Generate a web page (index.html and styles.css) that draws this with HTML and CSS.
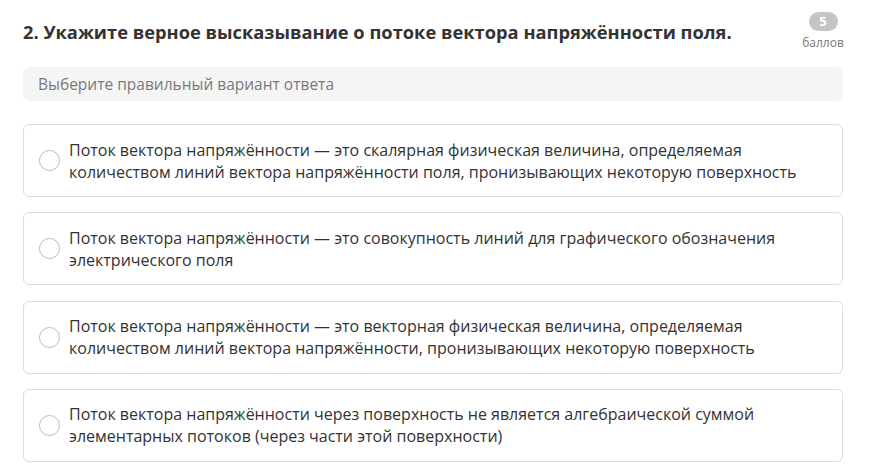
FILE: index.html
```html
<!DOCTYPE html>
<html lang="ru">
<head>
<meta charset="utf-8">
<link rel="stylesheet" href="styles.css">
</head>
<body>
<div class="question">
  <div class="head">
    <h2 class="title">2. Укажите верное высказывание о потоке вектора напряжённости поля.</h2>
    <div class="points">
      <span class="badge">5</span>
      <span class="points-label">баллов</span>
    </div>
  </div>
  <div class="hint">Выберите правильный вариант ответа</div>
  <div class="options">
    <label class="option"><span class="radio"></span><span class="text">Поток вектора напряжённости — это скалярная физическая величина, определяемая количеством линий вектора напряжённости поля, пронизывающих некоторую поверхность</span></label>
    <label class="option"><span class="radio"></span><span class="text">Поток вектора напряжённости — это совокупность линий для графического обозначения электрического поля</span></label>
    <label class="option"><span class="radio"></span><span class="text">Поток вектора напряжённости — это векторная физическая величина, определяемая количеством линий вектора напряжённости, пронизывающих некоторую поверхность</span></label>
    <label class="option"><span class="radio"></span><span class="text">Поток вектора напряжённости через поверхность не является алгебраической суммой элементарных потоков (через части этой поверхности)</span></label>
  </div>
</div>
</body>
</html>
```
FILE: styles.css
```css
* { box-sizing: border-box; }
body {
  margin: 0;
  background: #fff;
  font-family: "Open Sans", "Noto Sans", sans-serif;
  color: #333;
}
.question {
  width: 820px;
  margin-left: 23px;
  padding-top: 18px;
}
.head {
  display: flex;
  justify-content: space-between;
  align-items: flex-start;
  height: 28px;
}
.title {
  margin: 0;
  font-size: 18.3px;
  font-weight: 700;
  line-height: 28px;
  color: #333;
}
.points {
  display: flex;
  flex-direction: column;
  align-items: center;
  width: 44px;
  margin-top: -6px;
  margin-right: -2px;
}
.badge {
  width: 29px;
  height: 19px;
  border-radius: 10px;
  background: #c4c4c4;
  color: #fff;
  font-size: 13px;
  font-weight: 700;
  line-height: 19px;
  text-align: center;
}
.points-label {
  font-size: 12px;
  color: #777;
  line-height: 16px;
  margin-top: 4px;
}
.hint {
  margin-top: 21px;
  height: 34px;
  background: #f5f5f5;
  border-radius: 6px;
  padding-left: 15px;
  font-size: 15.5px;
  line-height: 34px;
  color: #7a7a7a;
}
.options {
  margin-top: 23px;
  display: flex;
  flex-direction: column;
  gap: 15.3px;
}
.option {
  display: flex;
  align-items: center;
  height: 73px;
  border: 1px solid #dcdcdc;
  border-radius: 6px;
  padding-left: 15px;
  padding-right: 15px;
}
.radio {
  flex: none;
  width: 21px;
  height: 21px;
  border: 1px solid #b8b8b8;
  border-radius: 50%;
  margin-right: 9px;
}
.text {
  font-size: 16px;
  line-height: 22px;
  color: #333;
}
```
